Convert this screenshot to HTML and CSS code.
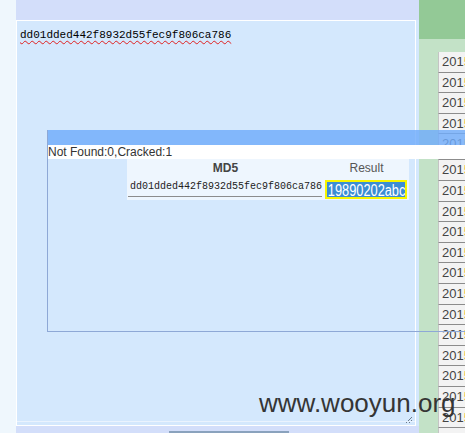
FILE: index.html
```html
<!DOCTYPE html>
<html>
<head>
<meta charset="utf-8">
<link rel="stylesheet" href="styles.css">
</head>
<body>
<div class="page">
  <div class="gutter"></div>
  <div class="main">
    <div class="topbar"></div>
    <div class="editor-wrap">
      <div class="editor">
        <span class="hash">dd01dded442f8932d55fec9f806ca786</span>
        <svg class="grip" width="8" height="8" viewBox="0 0 8 8"><path d="M1 7 L7 1 M4 7 L7 4" stroke="#6a7a8a" stroke-width="1"/></svg>
      </div>
    </div>
    <div class="bottombar"><div class="btn-edge"></div></div>
  </div>
  <div class="side">
    <div class="side-head"></div>
    <div class="side-list">
      <div class="cell">201<span class="o">5</span></div>
      <div class="cell">201<span class="o">5</span></div>
      <div class="cell">201<span class="o">5</span></div>
      <div class="cell">201<span class="o">5</span></div>
      <div class="cell tall">201<span class="o">5</span></div>
      <div class="cell">201<span class="o">5</span></div>
      <div class="cell">201<span class="o">5</span></div>
      <div class="cell">201<span class="o">5</span></div>
      <div class="cell">201<span class="o">5</span></div>
      <div class="cell">201<span class="o">5</span></div>
      <div class="cell">201<span class="o">5</span></div>
      <div class="cell">201<span class="o">5</span></div>
      <div class="cell">201<span class="o">5</span></div>
      <div class="cell">201<span class="o">5</span></div>
      <div class="cell">201<span class="o">5</span></div>
      <div class="cell">201<span class="o">5</span></div>
      <div class="cell">201<span class="o">5</span></div>
      <div class="cell">201<span class="o">5</span></div>
      <div class="cell">201<span class="o">5</span></div>
    </div>
  </div>
</div>

<div class="dialog">
  <div class="dlg-head"></div>
  <div class="dlg-status">Not Found:0,Cracked:1</div>
  <div class="result-table">
    <div class="th th-md5">MD5</div>
    <div class="th th-res">Result</div>
    <div class="td-md5"><span>dd01dded442f8932d55fec9f806ca786</span></div>
    <div class="td-res"><span class="res-text">19890202abc</span></div>
  </div>
</div>

<div class="wm">www.wooyun.org</div>
</body>
</html>
```

FILE: styles.css
```css
html, body {
  margin: 0;
  padding: 0;
}
body {
  width: 465px;
  height: 433px;
  overflow: hidden;
  position: relative;
  font-family: "Liberation Sans", Arial, sans-serif;
  background: #eff7fd;
}
.page {
  display: flex;
  width: 465px;
  height: 433px;
}
.gutter {
  width: 16px;
  flex: none;
  background: #eff7fd;
}
.main {
  width: 403px;
  flex: none;
  display: flex;
  flex-direction: column;
  background: #d3defa;
}
.topbar {
  height: 20px;
  flex: none;
  background: #d3defa;
}
.editor-wrap {
  height: 406px;
  flex: none;
  background: #d4e8fd;
  padding-right: 3px;
  box-sizing: border-box;
  display: flex;
}
.editor {
  flex: 1;
  border: 1px solid #ffffff;
  background: #d4e8fd;
  position: relative;
  padding: 3px 0 0 3px;
  box-sizing: border-box;
}
.editor::after {
  content: "";
  position: absolute;
  left: 0;
  right: 0;
  bottom: 3px;
  height: 1px;
  background: #eaf3fe;
}
.hash {
  font-family: "Liberation Mono", monospace;
  font-size: 11px;
  line-height: 14px;
  color: #000;
  text-decoration: underline wavy #e02020;
  text-decoration-thickness: 1px;
  text-underline-offset: 2px;
}
.grip {
  position: absolute;
  right: 2px;
  bottom: 1px;
}
.bottombar {
  flex: 1;
  background: #d3defa;
  position: relative;
  display: flex;
  align-items: flex-end;
  padding-left: 153px;
}
.btn-edge {
  width: 120px;
  height: 2px;
  background: #8aa2bd;
}
.side {
  width: 46px;
  flex: none;
  display: flex;
  flex-direction: column;
}
.side-head {
  height: 39px;
  flex: none;
  background: #93c996;
}
.side-list {
  flex: 1;
  background: #c3e2c7;
  padding: 13px 0 0 19px;
  overflow: hidden;
}
.cell {
  height: 20.6px;
  box-sizing: border-box;
  background: #f3f3f3;
  border-left: 1px solid #c4c4c4;
  border-bottom: 1px solid #8c8c8c;
  font-size: 13px;
  line-height: 19px;
  color: #444;
  padding-left: 3px;
  white-space: nowrap;
  overflow: hidden;
}
.cell.tall {
  height: 26px;
}
.cell .o {
  color: #f0a830;
}
.dialog {
  position: absolute;
  left: 47px;
  top: 130px;
  width: 440px;
  height: 202px;
  box-sizing: border-box;
  border-left: 1px solid #8ea8d6;
  border-bottom: 1px solid #8ea8d6;
}
.dlg-head {
  height: 15px;
  background: rgba(112, 172, 250, 0.82);
}
.dlg-status {
  height: 14px;
  background: #ffffff;
  font-size: 12px;
  line-height: 14px;
  color: #333;
  padding-left: 0;
}
.result-table {
  margin-left: 79px;
  width: 282px;
  height: 41px;
  background: #eef6fe;
  display: grid;
  grid-template-columns: 197px 85px;
  grid-template-rows: 19px 22px;
}
.th {
  font-size: 12px;
  line-height: 19px;
  text-align: center;
  color: #555;
}
.th-md5 {
  font-weight: bold;
  color: #444;
}
.td-md5 {
  margin-left: 1px;
  width: 194px;
  height: 19px;
  box-sizing: border-box;
  border-bottom: 1px solid #8c8c8c;
  padding-left: 2px;
  font-family: "Liberation Mono", monospace;
  font-size: 10px;
  line-height: 18px;
  color: #222;
  white-space: nowrap;
}
.td-res {
  margin: 2px 0 0 1px;
  width: 82px;
  height: 19px;
  box-sizing: border-box;
  border: 2px solid #f6f600;
  background: #3b8dd3;
  overflow: hidden;
  white-space: nowrap;
}
.res-text {
  display: inline-block;
  font-size: 16px;
  line-height: 15px;
  color: #ffffff;
  transform: scaleX(0.8);
  transform-origin: left center;
  padding-left: 1px;
}
.wm {
  position: absolute;
  left: 259px;
  top: 388px;
  font-size: 26px;
  line-height: 30px;
  color: #353535;
  white-space: nowrap;
}
```
